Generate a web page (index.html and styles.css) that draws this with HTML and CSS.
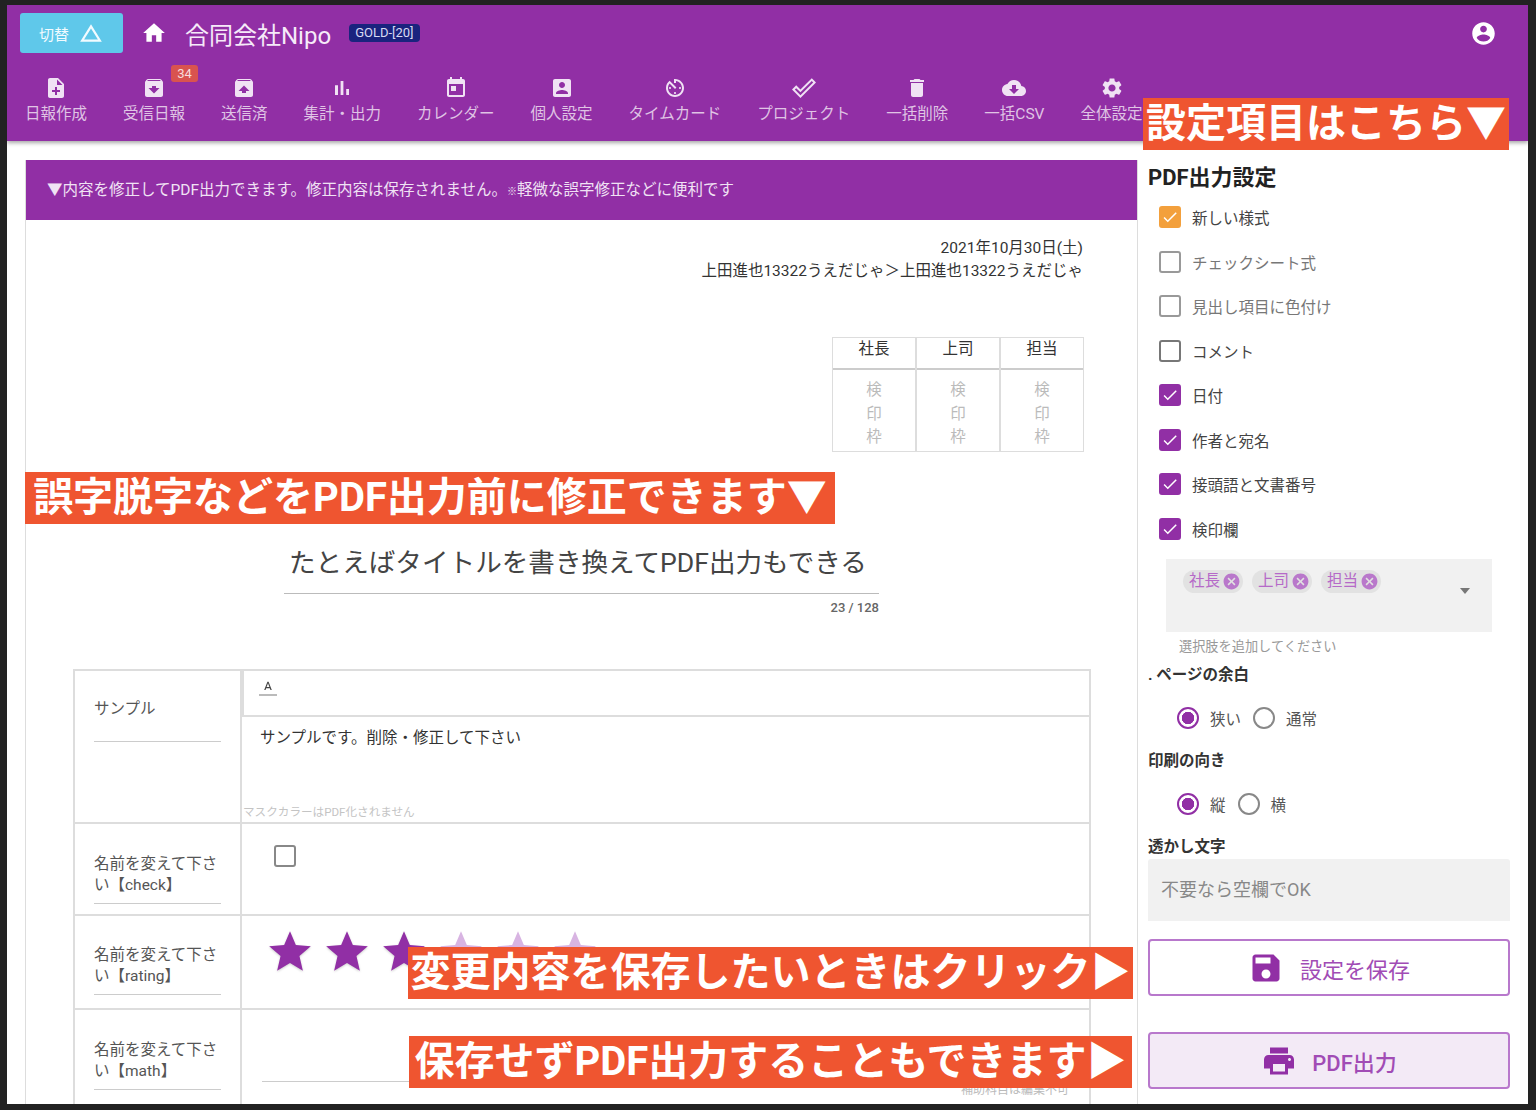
FILE: index.html
```html
<!DOCTYPE html>
<html lang="ja">
<head>
  <meta charset="utf-8">
  <title>日報 PDF出力</title>
  <link rel="stylesheet" href="styles.css">
</head>
<body>
  <svg class="defs" width="0" height="0">
    <symbol id="i-note" viewBox="0 0 24 24"><path d="M14 2H6c-1.1 0-1.99.9-1.99 2L4 20c0 1.1.89 2 1.99 2H18c1.1 0 2-.9 2-2V8l-6-6zm2 14h-3v3h-2v-3H8v-2h3v-3h2v3h3v2zm-3-7V3.5L18.5 9H13z"/></symbol>
    <symbol id="i-inbox" viewBox="0 0 24 24"><path d="M20.54 5.23l-1.39-1.68C18.88 3.21 18.47 3 18 3H6c-.47 0-.88.21-1.16.55L3.46 5.23C3.17 5.57 3 6.02 3 6.5V19c0 1.1.9 2 2 2h14c1.1 0 2-.9 2-2V6.5c0-.48-.17-.93-.46-1.27zM12 17.5L6.5 12H10v-2h4v2h3.5L12 17.5zM5.12 5l.81-1h12l.94 1H5.12z"/></symbol>
    <symbol id="i-sent" viewBox="0 0 24 24"><path d="M20.55 5.22l-1.39-1.68C18.88 3.21 18.47 3 18 3H6c-.47 0-.88.21-1.15.55L3.46 5.22C3.17 5.57 3 6.01 3 6.5V19c0 1.1.89 2 2 2h14c1.1 0 2-.9 2-2V6.5c0-.49-.17-.93-.45-1.28zM12 9.5l5.5 5.5H14v2h-4v-2H6.5L12 9.5zM5.12 5l.82-1h12l.93 1H5.12z"/></symbol>
    <symbol id="i-chart" viewBox="0 0 24 24"><path d="M5 9.2h3V19H5zM10.6 5h2.8v14h-2.8zm5.6 8H19v6h-2.8z"/></symbol>
    <symbol id="i-event" viewBox="0 0 24 24"><path d="M19 3h-1V1h-2v2H8V1H6v2H5c-1.11 0-1.99.9-1.99 2L3 19c0 1.1.89 2 2 2h14c1.1 0 2-.9 2-2V5c0-1.1-.9-2-2-2zm0 16H5V8h14v11zM7 10h5v5H7z"/></symbol>
    <symbol id="i-person" viewBox="0 0 24 24"><path d="M3 5v14c0 1.1.89 2 2 2h14c1.1 0 2-.9 2-2V5c0-1.1-.9-2-2-2H5c-1.11 0-2 .9-2 2zm12 4c0 1.66-1.34 3-3 3s-3-1.34-3-3 1.34-3 3-3 3 1.34 3 3zm-9 8c0-2 4-3.1 6-3.1s6 1.1 6 3.1v1H6v-1z"/></symbol>
    <symbol id="i-timer" viewBox="0 0 24 24"><path d="M11 17c0 .55.45 1 1 1s1-.45 1-1-.45-1-1-1-1 .45-1 1zm0-14v4h2V5.08c3.39.49 6 3.39 6 6.92 0 3.87-3.13 7-7 7s-7-3.13-7-7c0-1.68.59-3.22 1.58-4.42L12 13l1.41-1.41-6.8-6.8v.02C4.42 6.45 3 9.05 3 12c0 4.97 4.02 9 9 9 4.97 0 9-4.03 9-9s-4.03-9-9-9h-1zm7 9c0-.55-.45-1-1-1s-1 .45-1 1 .45 1 1 1 1-.45 1-1zM6 12c0 .55.45 1 1 1s1-.45 1-1-.45-1-1-1-1 .45-1 1z"/></symbol>
    <symbol id="i-check-o" viewBox="0 0 24 24"><path d="M19.78 2.2L24 6.42 8.44 22 0 13.55l4.22-4.22 4.22 4.22L19.78 2.2m0 2.8L8.44 16.36l-4.22-4.17-1.41 1.36 5.63 5.62L21.19 6.42 19.78 5z"/></symbol>
    <symbol id="i-trash" viewBox="0 0 24 24"><path d="M6 19c0 1.1.9 2 2 2h8c1.1 0 2-.9 2-2V7H6v12zM19 4h-3.5l-1-1h-5l-1 1H5v2h14V4z"/></symbol>
    <symbol id="i-cloud" viewBox="0 0 24 24"><path d="M19.35 10.04C18.67 6.59 15.64 4 12 4 9.11 4 6.6 5.64 5.35 8.04 2.34 8.36 0 10.91 0 14c0 3.31 2.69 6 6 6h13c2.76 0 5-2.24 5-5 0-2.64-2.05-4.78-4.65-4.96zM17 13l-5 5-5-5h3V9h4v4h3z"/></symbol>
    <symbol id="i-gear" viewBox="0 0 24 24"><path d="M19.14 12.94c.04-.3.06-.61.06-.94 0-.32-.02-.64-.07-.94l2.03-1.58c.18-.14.23-.41.12-.61l-1.92-3.32c-.12-.22-.37-.29-.59-.22l-2.39.96c-.5-.38-1.03-.7-1.62-.94l-.36-2.54c-.04-.24-.24-.41-.48-.41h-3.84c-.24 0-.43.17-.47.41l-.36 2.54c-.59.24-1.13.57-1.62.94l-2.39-.96c-.22-.08-.47 0-.59.22L2.74 8.87c-.12.21-.08.47.12.61l2.03 1.58c-.05.3-.09.63-.09.94s.02.64.07.94l-2.03 1.58c-.18.14-.23.41-.12.61l1.92 3.32c.12.22.37.29.59.22l2.39-.96c.5.38 1.03.7 1.62.94l.36 2.54c.05.24.24.41.48.41h3.84c.24 0 .44-.17.47-.41l.36-2.54c.59-.24 1.13-.56 1.62-.94l2.39.96c.22.08.47 0 .59-.22l1.92-3.32c.12-.22.07-.47-.12-.61l-2.01-1.58zM12 15.6c-1.98 0-3.6-1.62-3.6-3.6s1.62-3.6 3.6-3.6 3.6 1.62 3.6 3.6-1.62 3.6-3.6 3.6z"/></symbol>
    <symbol id="i-home" viewBox="0 0 24 24"><path d="M10 20v-6h4v6h5v-8h3L12 3 2 12h3v8z"/></symbol>
    <symbol id="i-account" viewBox="0 0 24 24"><path d="M12 2C6.48 2 2 6.48 2 12s4.48 10 10 10 10-4.48 10-10S17.52 2 12 2zm0 3c1.66 0 3 1.34 3 3s-1.34 3-3 3-3-1.34-3-3 1.34-3 3-3zm0 14.2c-2.5 0-4.71-1.28-6-3.22.03-1.99 4-3.08 6-3.08 1.99 0 5.97 1.09 6 3.08-1.29 1.94-3.5 3.22-6 3.22z"/></symbol>
    <symbol id="i-delta" viewBox="0 0 24 24"><path d="M12 7.77L18.39 18H5.61L12 7.77M12 4L2 20h20L12 4z"/></symbol>
    <symbol id="i-tick" viewBox="0 0 24 24"><path d="M9 16.17L4.83 12l-1.42 1.41L9 19 21 7l-1.41-1.41z"/></symbol>
    <symbol id="i-cancel" viewBox="0 0 24 24"><path d="M12 2C6.47 2 2 6.47 2 12s4.47 10 10 10 10-4.47 10-10S17.53 2 12 2zm5 13.59L15.59 17 12 13.41 8.41 17 7 15.59 10.59 12 7 8.41 8.41 7 12 10.59 15.59 7 17 8.41 13.41 12 17 15.59z"/></symbol>
    <symbol id="i-star" viewBox="0 0 24 24"><path d="M12 17.27L18.18 21l-1.64-7.03L22 9.24l-7.19-.61L12 2 9.19 8.63 2 9.24l5.46 4.73L5.82 21z"/></symbol>
    <symbol id="i-save" viewBox="0 0 24 24"><path d="M17 3H5c-1.11 0-2 .9-2 2v14c0 1.1.89 2 2 2h14c1.1 0 2-.9 2-2V7l-4-4zm-5 16c-1.66 0-3-1.34-3-3s1.34-3 3-3 3 1.34 3 3-1.34 3-3 3zm3-10H5V5h10v4z"/></symbol>
    <symbol id="i-print" viewBox="0 0 24 24"><path d="M19 8H5c-1.66 0-3 1.34-3 3v6h4v4h12v-4h4v-6c0-1.66-1.34-3-3-3zm-3 11H8v-5h8v5zm3-7c-.55 0-1-.45-1-1s.45-1 1-1 1 .45 1 1-.45 1-1 1zm-1-9H6v4h12V3z"/></symbol>
    <symbol id="i-color" viewBox="0 0 24 24"><path d="M11 3L5.5 17h2.25l1.12-3h6.25l1.12 3h2.25L13 3h-2zm-1.38 9L12 5.67 14.38 12H9.62z"/></symbol>
  </svg>

  <div class="app">
    <header class="topbar">
      <div class="brand-row">
        <button class="switch-btn">切替 <svg class="switch-icon"><use href="#i-delta"/></svg></button>
        <svg class="home-icon"><use href="#i-home"/></svg>
        <span class="company">合同会社Nipo</span>
        <span class="plan">GOLD-[20]</span>
        <svg class="account-icon"><use href="#i-account"/></svg>
      </div>
      <nav class="menu">
        <a class="menu-item"><svg><use href="#i-note"/></svg>日報作成</a>
        <a class="menu-item"><svg><use href="#i-inbox"/></svg>受信日報<span class="count">34</span></a>
        <a class="menu-item"><svg><use href="#i-sent"/></svg>送信済</a>
        <a class="menu-item"><svg><use href="#i-chart"/></svg>集計・出力</a>
        <a class="menu-item"><svg><use href="#i-event"/></svg>カレンダー</a>
        <a class="menu-item"><svg><use href="#i-person"/></svg>個人設定</a>
        <a class="menu-item"><svg><use href="#i-timer"/></svg>タイムカード</a>
        <a class="menu-item"><svg><use href="#i-check-o"/></svg>プロジェクト</a>
        <a class="menu-item"><svg><use href="#i-trash"/></svg>一括削除</a>
        <a class="menu-item"><svg><use href="#i-cloud"/></svg>一括CSV</a>
        <a class="menu-item"><svg><use href="#i-gear"/></svg>全体設定</a>
      </nav>
    </header>

    <main class="content">
      <section class="panel">
        <div class="notice">▼内容を修正してPDF出力できます。修正内容は保存されません。<small>※</small>軽微な誤字修正などに便利です</div>

        <div class="meta">
          <div>2021年10月30日(土)</div>
          <div>上田進也13322うえだじゃ＞上田進也13322うえだじゃ</div>
        </div>

        <div class="stamps">
          <div class="stamp"><div class="stamp-head">社長</div><div class="stamp-body">検<br>印<br>枠</div></div>
          <div class="stamp"><div class="stamp-head">上司</div><div class="stamp-body">検<br>印<br>枠</div></div>
          <div class="stamp"><div class="stamp-head">担当</div><div class="stamp-body">検<br>印<br>枠</div></div>
        </div>

        <div class="doc-title">たとえばタイトルを書き換えてPDF出力もできる</div>
        <div class="doc-counter">23 / 128</div>

        <div class="form-table">
          <div class="form-row row-sample">
            <div class="form-label"><div class="label-text">サンプル</div></div>
            <div class="form-value editor">
              <div class="editor-bar"><svg><use href="#i-color"/></svg></div>
              <div class="editor-text">サンプルです。削除・修正して下さい</div>
              <div class="editor-note">マスクカラーはPDF化されません</div>
            </div>
          </div>
          <div class="form-row row-check">
            <div class="form-label"><div class="label-text">名前を変えて下さい【check】</div></div>
            <div class="form-value"><span class="check-box big"></span></div>
          </div>
          <div class="form-row row-rating">
            <div class="form-label"><div class="label-text">名前を変えて下さい【rating】</div></div>
            <div class="form-value stars">
              <svg><use href="#i-star"/></svg>
              <svg><use href="#i-star"/></svg>
              <svg><use href="#i-star"/></svg>
              <svg class="off"><use href="#i-star"/></svg>
              <svg class="off"><use href="#i-star"/></svg>
              <svg class="off"><use href="#i-star"/></svg>
            </div>
          </div>
          <div class="form-row row-math">
            <div class="form-label"><div class="label-text">名前を変えて下さい【math】</div></div>
            <div class="form-value math">
              <div class="math-line"></div>
              <div class="math-note">補助科目は編集不可</div>
            </div>
          </div>
        </div>
      </section>

      <aside class="side">
        <h2 class="side-title">PDF出力設定</h2>

        <label class="opt"><span class="check-box orange"><svg><use href="#i-tick"/></svg></span>新しい様式</label>
        <label class="opt off"><span class="check-box"></span>チェックシート式</label>
        <label class="opt off"><span class="check-box"></span>見出し項目に色付け</label>
        <label class="opt"><span class="check-box dark"></span>コメント</label>
        <label class="opt"><span class="check-box on"><svg><use href="#i-tick"/></svg></span>日付</label>
        <label class="opt"><span class="check-box on"><svg><use href="#i-tick"/></svg></span>作者と宛名</label>
        <label class="opt"><span class="check-box on"><svg><use href="#i-tick"/></svg></span>接頭語と文書番号</label>
        <label class="opt"><span class="check-box on"><svg><use href="#i-tick"/></svg></span>検印欄</label>

        <div class="chip-select">
          <span class="chip">社長<svg><use href="#i-cancel"/></svg></span>
          <span class="chip">上司<svg><use href="#i-cancel"/></svg></span>
          <span class="chip">担当<svg><use href="#i-cancel"/></svg></span>
          <span class="caret"></span>
        </div>
        <div class="hint">選択肢を追加してください</div>

        <div class="side-label first">. ページの余白</div>
        <div class="radios">
          <span class="radio on"></span><span class="radio-text">狭い</span>
          <span class="radio"></span><span class="radio-text">通常</span>
        </div>

        <div class="side-label">印刷の向き</div>
        <div class="radios">
          <span class="radio on"></span><span class="radio-text">縦</span>
          <span class="radio"></span><span class="radio-text">横</span>
        </div>

        <div class="side-label">透かし文字</div>
        <div class="watermark">不要なら空欄でOK</div>

        <button class="action save"><svg><use href="#i-save"/></svg>設定を保存</button>
        <button class="action pdf"><svg><use href="#i-print"/></svg>PDF出力</button>
      </aside>
    </main>

    <!-- annotation labels painted over the screenshot -->
    <div class="callout c-settings">設定項目はこちら▼</div>
    <div class="callout c-typo">誤字脱字などをPDF出力前に修正できます▼</div>
    <div class="callout c-save">変更内容を保存したいときはクリック▶</div>
    <div class="callout c-pdf">保存せずPDF出力することもできます▶</div>
  </div>
</body>
</html>
```

FILE: styles.css
```css
* {
  box-sizing: border-box;
}
body {
  margin: 0;
  height: 1110px;
  padding: 5px 8px 6px 7px;
  background: #222;
  overflow: hidden;
  font-family: Roboto, "Noto Sans CJK JP", sans-serif;
  font-size: 15.5px;
  color: #444;
}
svg {
  fill: currentColor;
}
.defs {
  position: absolute;
}
.app {
  position: relative;
  height: 1099px;
  background: #fff;
  overflow: hidden;
}

/* top bar */
.topbar {
  position: relative;
  z-index: 1;
  height: 136px;
  background: #912fa5;
  box-shadow: 0 2px 4px rgba(0, 0, 0, .35);
}
.brand-row {
  display: flex;
  align-items: center;
  height: 56px;
  padding-left: 13px;
  color: #fff;
}
.switch-btn {
  display: flex;
  align-items: center;
  justify-content: center;
  gap: 9px;
  width: 103px;
  height: 40px;
  border: 0;
  border-radius: 3px;
  background: #5fc8ea;
  color: #f2fbff;
  font: 15px Roboto, "Noto Sans CJK JP", sans-serif;
}
.switch-icon {
  width: 26px;
  height: 26px;
}
.home-icon {
  width: 26px;
  height: 26px;
  margin-left: 18px;
}
.company {
  margin-left: 18px;
  font-size: 24px;
  color: #f6eaf9;
}
.plan {
  margin-left: 18px;
  padding: 0 6px;
  border-radius: 4px;
  background: #1a237e;
  font-size: 13px;
  line-height: 18px;
  color: #d8daf2;
}
.account-icon {
  width: 27px;
  height: 27px;
  margin-left: auto;
  margin-right: 31px;
}
.menu {
  display: flex;
  gap: 36px;
  margin-top: 15px;
  padding-left: 18px;
}
.menu-item {
  position: relative;
  display: flex;
  flex-direction: column;
  align-items: center;
  line-height: 22px;
  white-space: nowrap;
  color: rgba(255, 255, 255, .72);
}
.menu-item svg {
  width: 24px;
  height: 24px;
  margin-bottom: 3px;
  color: #f0e2f4;
}
.count {
  position: absolute;
  top: -11px;
  left: 48px;
  width: 27px;
  border-radius: 3px;
  background: #d9534f;
  font-size: 13px;
  line-height: 17px;
  text-align: center;
  color: #f7dcdc;
}

/* page body */
.content {
  display: flex;
  gap: 10px;
  padding: 19px 18px 0;
}
.panel {
  flex: none;
  width: 1113px;
  height: 950px;
  border-left: 1px solid #ddd;
  border-right: 1px solid #ddd;
}
.notice {
  height: 60px;
  padding-left: 21px;
  background: #912fa5;
  line-height: 60px;
  color: #f0e2f4;
}
.notice small {
  font-size: 10px;
}
.meta {
  padding: 17px 54px 0 0;
  line-height: 23px;
  text-align: right;
  color: #333;
}
.stamps {
  display: flex;
  justify-content: flex-end;
  margin: 54px 53px 0 0;
}
.stamp {
  width: 84px;
  border: 1px solid #ddd;
}
.stamp-head {
  height: 32px;
  border-bottom: 2px solid #ccc;
  line-height: 23px;
  text-align: center;
  color: #333;
}
.stamp-body {
  height: 81px;
  padding-top: 9px;
  line-height: 23.5px;
  text-align: center;
  color: #bbb;
}
.doc-title {
  width: 595px;
  margin: 96px 0 0 258px;
  padding: 0 5px 15px;
  border-bottom: 1px solid #bbb;
  font-size: 26.6px;
  line-height: 30px;
  white-space: nowrap;
  color: #444;
}
.doc-counter {
  width: 595px;
  margin: 6px 0 0 258px;
  font-size: 13px;
  font-weight: 500;
  line-height: 16px;
  text-align: right;
  color: #666;
}

/* form table */
.form-table {
  width: 1018px;
  margin: 53px 0 0 47px;
  border: 2px solid #ddd;
  border-bottom: 0;
}
.form-row {
  display: flex;
  border-bottom: 2px solid #ddd;
}
.row-sample { height: 153px; }
.row-check { height: 92px; }
.row-rating { height: 94px; }
.row-math { height: 100px; }
.form-label {
  flex: none;
  width: 167px;
  padding: 30px 0 0 19px;
  border-right: 2px solid #ddd;
}
.row-sample .form-label {
  padding-top: 28px;
}
.row-rating .form-label {
  padding-top: 29px;
}
.label-text {
  width: 127px;
  padding-bottom: 7px;
  border-bottom: 1px solid #ccc;
  line-height: 21px;
  color: #555;
}
.row-sample .label-text {
  padding-bottom: 21px;
}
.form-value {
  flex: 1;
}
.editor {
  display: flex;
  flex-direction: column;
}
.editor-bar {
  height: 46px;
  border-left: 2px solid #ddd;
  border-bottom: 2px solid #ddd;
  padding: 9px 0 0 15px;
}
.editor-bar svg {
  display: block;
  width: 18px;
  height: 16px;
  border-bottom: 2px solid #bbb;
  color: #444;
}
.editor-text {
  padding: 11px 0 0 18px;
  line-height: 21px;
  color: #333;
}
.editor-note {
  margin-top: auto;
  padding: 0 0 2px 1px;
  font-size: 11.6px;
  line-height: 16px;
  color: #c4c4c4;
}
.row-check .form-value {
  padding: 21px 0 0 32px;
}
.check-box {
  display: flex;
  align-items: center;
  justify-content: center;
  flex: none;
  width: 22px;
  height: 22px;
  border: 2px solid #999;
  border-radius: 3px;
  color: #fff;
}
.check-box svg {
  width: 22px;
  height: 22px;
}
.check-box.big {
  border-color: #888;
}
.check-box.orange {
  border-color: #f3a03c;
  background: #f3a03c;
}
.check-box.on {
  border-color: #912fa5;
  background: #912fa5;
}
.check-box.dark {
  border-color: #777;
}
.stars {
  display: flex;
  gap: 7px;
  padding: 11px 0 0 23px;
  color: #912fa5;
}
.stars svg {
  width: 50px;
  height: 50px;
  filter: drop-shadow(0 1px 1px rgba(0, 0, 0, .2));
}
.stars .off {
  color: #d8b4e2;
  filter: none;
}
.math {
  padding: 71px 0 0 20px;
}
.math-line {
  width: 807px;
  border-bottom: 1px solid #ccc;
}
.math-note {
  width: 807px;
  font-size: 12px;
  line-height: 17px;
  text-align: right;
  color: #bbb;
}

/* settings column */
.side {
  flex: none;
  width: 362px;
}
.side-title {
  height: 35px;
  margin: 0;
  font-size: 22px;
  font-weight: 700;
  line-height: 36px;
  color: #222;
}
.opt {
  display: flex;
  align-items: center;
  gap: 11px;
  height: 44.5px;
  padding-left: 11px;
  color: #444;
}
.opt.off {
  color: #777;
}
.chip-select {
  position: relative;
  display: flex;
  gap: 9px;
  width: 326px;
  height: 73px;
  margin: 8px 0 0 18px;
  padding: 11px 17px 0;
  background: #f1f1f1;
}
.chip {
  display: flex;
  align-items: center;
  justify-content: space-between;
  width: 60px;
  height: 23px;
  padding: 0 2px 0 6px;
  border-radius: 12px;
  background: #e2e2e2;
  line-height: 23px;
  color: #b56ac8;
}
.chip svg {
  width: 19px;
  height: 19px;
  color: #b978cb;
}
.caret {
  position: absolute;
  top: 29px;
  right: 22px;
  border: 5px solid transparent;
  border-top: 6px solid #777;
}
.hint {
  height: 20px;
  margin-top: 5px;
  padding-left: 31px;
  font-size: 13.2px;
  line-height: 20px;
  color: #999;
}
.side-label {
  height: 20px;
  margin-top: 11px;
  font-weight: 700;
  line-height: 20px;
  color: #333;
}
.side-label.first {
  margin-top: 8px;
}
.radios {
  display: flex;
  align-items: center;
  height: 44px;
  margin-top: 11px;
  padding-left: 29px;
}
.radio {
  flex: none;
  width: 22px;
  height: 22px;
  border: 2px solid #888;
  border-radius: 50%;
}
.radio.on {
  border-color: #912fa5;
  background: radial-gradient(circle, #912fa5 0 6px, transparent 6.5px);
}
.radio-text {
  margin: 0 12px 0 11px;
  color: #555;
}
.watermark {
  height: 62px;
  margin-top: 2px;
  padding-left: 13px;
  border-radius: 3px 3px 0 0;
  background: #f1f1f1;
  font-size: 18px;
  line-height: 62px;
  color: #888;
}
.action {
  display: flex;
  align-items: center;
  justify-content: center;
  width: 100%;
  height: 57px;
  margin-top: 18px;
  border: 2px solid #b878cc;
  border-radius: 4px;
  background: #fff;
  font: 22px Roboto, "Noto Sans CJK JP", sans-serif;
  color: #a14cb5;
}
.action svg {
  width: 36px;
  height: 36px;
  color: #912fa5;
}
.action.save svg {
  margin-right: 16px;
}
.action.pdf {
  margin-top: 36px;
  background: #f3eaf6;
  font-weight: 500;
}
.action.pdf svg {
  margin-right: 15px;
}

/* orange annotations */
.callout {
  position: absolute;
  z-index: 2;
  display: flex;
  align-items: center;
  justify-content: center;
  height: 52px;
  background: #ef5530;
  font-size: 40px;
  font-weight: 700;
  line-height: 52px;
  white-space: nowrap;
  color: #fff;
}
.c-settings {
  top: 93px;
  left: 1136px;
  width: 366px;
}
.c-typo {
  top: 467px;
  left: 18px;
  width: 810px;
}
.c-save {
  top: 942px;
  left: 401px;
  width: 725px;
}
.c-pdf {
  top: 1031px;
  left: 402px;
  width: 723px;
}
```
